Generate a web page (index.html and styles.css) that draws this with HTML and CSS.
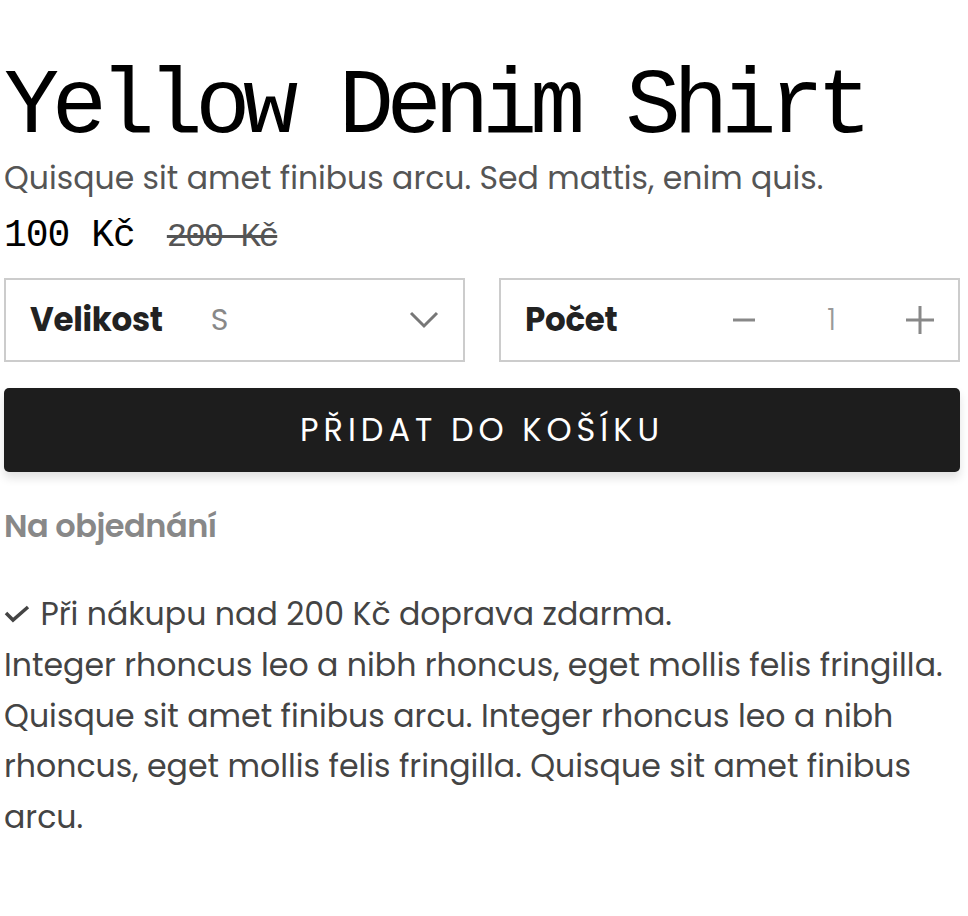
FILE: index.html
```html
<!DOCTYPE html>
<html lang="cs">
<head>
<meta charset="UTF-8" />
<meta name="viewport" content="width=device-width, initial-scale=1" />
<title>Yellow Denim Shirt</title>
<link rel="stylesheet" href="styles.css">
</head>
<body>

<main class="product">
  <h1 class="product-title">Yellow Denim Shirt</h1>
  <p class="product-lead">Quisque sit amet finibus arcu. Sed mattis, enim quis.</p>
  <div class="price">
    <span class="price-now">100 Kč</span>
    <s class="price-old">200 Kč</s>
  </div>

  <div class="options">
    <label class="option">
      <span class="option-label">Velikost</span>
      <span class="option-value">S</span>
      <svg class="chevron" viewBox="0 0 30 18" aria-hidden="true">
        <path d="M2 2 L15 15 L28 2" />
      </svg>
    </label>
    <div class="option">
      <span class="option-label">Počet</span>
      <div class="stepper">
        <button class="step" aria-label="Méně">
          <svg viewBox="0 0 28 28"><path d="M2 14 H24" /></svg>
        </button>
        <span class="qty">1</span>
        <button class="step" aria-label="Více">
          <svg viewBox="0 0 28 28"><path d="M0 14 H28 M14 0 V28" /></svg>
        </button>
      </div>
    </div>
  </div>

  <button class="add-to-cart">Přidat do košíku</button>

  <p class="stock">Na objednání</p>

  <div class="description">
    <p class="perk">
      <svg class="check" viewBox="0 0 28 18" aria-hidden="true"><path d="M2 8 L9 15 L24 2" /></svg>
      Při nákupu nad 200 Kč doprava zdarma.
    </p>
    <p>Integer rhoncus leo a nibh rhoncus, eget mollis felis fringilla. Quisque sit amet finibus arcu. Integer rhoncus leo a nibh rhoncus, eget mollis felis fringilla. Quisque sit amet finibus arcu.</p>
  </div>
</main>

</body>
</html>
```

FILE: styles.css
```css
/* Reset */
*, *::before, *::after {
  margin: 0; padding: 0; box-sizing: border-box;
}
html, body {
  background: #fff;
  color: #444;
  font-family: 'Poppins', 'Open Sans', 'Noto Sans', sans-serif;
}

.product {
  padding: 62px 8px 40px 4px;
}

.product-title {
  font-family: 'Liberation Mono', monospace;
  font-size: 92px;
  font-weight: 400;
  line-height: 1;
  letter-spacing: -7.4px;
  color: #000;
}

.product-lead {
  font-size: 31.5px;
  line-height: 1.3;
  color: #555;
  margin-top: 4px;
}

.price {
  display: flex;
  align-items: baseline;
  gap: 32px;
  margin-top: 12px;
  font-family: 'Liberation Mono', monospace;
  font-size: 38px;
  line-height: 1.3;
}
.price-now {
  color: #000;
  letter-spacing: -1px;
}
.price-old {
  color: #555;
  font-size: 34px;
  letter-spacing: -2px;
}

.options {
  display: flex;
  gap: 34px;
  margin-top: 18px;
}
.option {
  flex: 1;
  height: 84px;
  border: 2px solid #ccc;
  display: flex;
  align-items: center;
  padding: 0 24px 0 24px;
}
.option-label {
  font-weight: 700;
  font-size: 32.5px;
  color: #222;
  letter-spacing: -0.3px;
}
.option-value {
  margin-left: 48px;
  font-size: 30px;
  color: #888;
  flex: 1;
}
.chevron {
  width: 30px;
  height: 18px;
  fill: none;
  stroke: #777;
  stroke-width: 3;
}

.stepper {
  flex: 1;
  display: flex;
  align-items: center;
  justify-content: flex-end;
}
.step {
  background: none;
  border: none;
  display: flex;
  cursor: pointer;
}
.step svg {
  width: 28px;
  height: 28px;
  fill: none;
  stroke: #888;
  stroke-width: 3;
}
.qty {
  font-size: 30px;
  font-weight: 300;
  color: #999;
  margin: 0 70px 0 68px;
}

.add-to-cart {
  display: block;
  width: 100%;
  height: 84px;
  margin-top: 26px;
  background: #1d1d1d;
  color: #fff;
  border: none;
  border-radius: 5px;
  box-shadow: 0 6px 10px rgba(0,0,0,0.12);
  font-family: inherit;
  font-size: 32px;
  font-weight: 400;
  letter-spacing: 5px;
  text-transform: uppercase;
  cursor: pointer;
}

.stock {
  margin-top: 30px;
  font-size: 32px;
  font-weight: 600;
  color: #888;
  letter-spacing: -0.5px;
}

.description {
  margin-top: 39px;
  font-size: 31.6px;
  line-height: 50.7px;
  color: #444;
}
.check {
  width: 28px;
  height: 18px;
  fill: none;
  stroke: #444;
  stroke-width: 3.5;
  vertical-align: 2px;
}
```
